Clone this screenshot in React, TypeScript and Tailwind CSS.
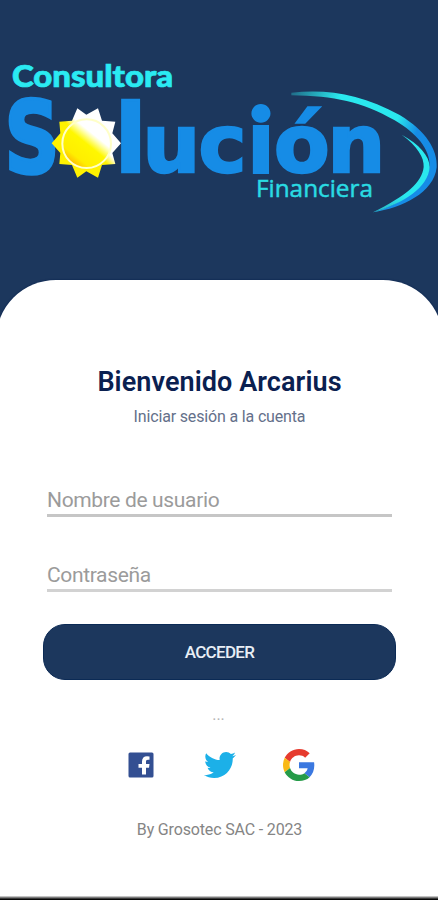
import React, { useState } from 'react';

const Logo = () => (
    <svg className="block h-[280px] w-full" viewBox="0 0 438 280" aria-label="Consultora Solución Financiera">
        <defs>
            <linearGradient id="sun" x1="0.15" y1="0.9" x2="0.75" y2="0.15">
                <stop offset="0" stopColor="#ffb400" />
                <stop offset="0.2" stopColor="#ffee00" />
                <stop offset="0.55" stopColor="#fff700" />
                <stop offset="0.72" stopColor="#ffffb0" />
                <stop offset="0.8" stopColor="#ffffff" />
            </linearGradient>
            <linearGradient id="rays" x1="0.2" y1="0.8" x2="0.8" y2="0.2">
                <stop offset="0" stopColor="#fff200" />
                <stop offset="0.5" stopColor="#fff200" />
                <stop offset="0.65" stopColor="#ffffff" />
            </linearGradient>
            <linearGradient id="outer" gradientUnits="userSpaceOnUse" x1="220" y1="130" x2="650" y2="300">
                <stop offset="0" stopColor="#2ae8ee" stopOpacity="0.3" />
                <stop offset="0.3" stopColor="#2ae8ee" />
                <stop offset="0.7" stopColor="#2ae8ee" />
                <stop offset="0.85" stopColor="#168ce6" />
            </linearGradient>
            <linearGradient id="inner" gradientUnits="userSpaceOnUse" x1="550" y1="250" x2="470" y2="490">
                <stop offset="0" stopColor="#2ae8ee" />
                <stop offset="0.7" stopColor="#2ae8ee" />
                <stop offset="1" stopColor="#2ab0c0" />
            </linearGradient>
        </defs>
        <text x="12" y="86.500" textLength="161" lengthAdjust="spacingAndGlyphs" fill="#2aeaf2" stroke="#2aeaf2" strokeWidth="0.700" className="font-['Lato',sans-serif] text-[30px] font-black">Consultora</text>
        <g fill="#168ce6" stroke="#168ce6" strokeWidth="2.500" className="font-['DejaVu_Sans',sans-serif] font-bold">
            <text x="4.500" y="173" textLength="55" lengthAdjust="spacingAndGlyphs" strokeWidth="3.500" className="text-[99px]">S</text>
            <text y="172" className="text-[81px]">
                <tspan x="114.500" className="text-[94px]">l</tspan>
                <tspan x="142.500">u</tspan>
                <tspan x="198.500">c</tspan>
                <tspan x="249.500" y="171.500" strokeWidth="4" className="font-['Lato',sans-serif] text-[88px] font-black">i</tspan>
                <tspan x="274" y="172">ó</tspan>
                <tspan x="327.500">n</tspan>
            </text>
        </g>
        <text x="256" y="197" textLength="117" lengthAdjust="spacingAndGlyphs" fill="#2adbe3" stroke="#2adbe3" strokeWidth="0.500" className="font-['Open_Sans',sans-serif] text-[24.5px] font-medium">Financiera</text>
        <g transform="translate(0 50) scale(.33333)">
            <path d="M232 175 259 194 294 175 306 212 346 215 337 250 363 280 337 309 346 342 306 345 294 383 259 364 232 383 216 345 178 342 181 309 155 280 181 250 178 215 216 212Z" fill="url(#rays)" />
            <circle cx="260" cy="281" r="73" fill="url(#sun)" stroke="#ffffc8" strokeWidth="6" />
        </g>
        <g transform="translate(218 50) scale(.33333)">
            <path d="M220 128C330 116 430 133 545 195C625 243 659 300 656 352C648 428 553 474 465 487C575 452 627 402 635 348C636 297 596 250 530 211C430 155 350 138 220 136Z" fill="url(#outer)" />
            <path d="M551 254C604 282 635 319 635 351C631 412 557 460 465 487C566 436 612 398 617 351C619 322 598 289 551 254Z" fill="url(#inner)" />
        </g>
    </svg>
);

const FacebookIcon = () => (
    <svg className="h-[26px] w-[26px]" viewBox="0 0 26 26">
        <rect x="0.500" y="0.500" width="25" height="25" rx="1.500" fill="#334f92" />
        <path d="M14 22.500V15.700H10.500V12H14V9.500C14 6 16 4.300 19 4.300L21.500 4.500V7.800H20C18.500 7.800 18 8.500 18 9.700V12H21.500L21 15.700H18V22.500Z" fill="#fff" />
    </svg>
);

const TwitterIcon = () => (
    <svg className="h-[32px] w-[32px]" viewBox="0 0 24 24" fill="#1cb0e8">
        <path d="M23.954 4.569c-.885.389-1.830.654-2.825.775 1.014-.611 1.794-1.574 2.163-2.723-.951.555-2.005.959-3.127 1.184-.896-.959-2.173-1.559-3.591-1.559-2.717 0-4.920 2.203-4.920 4.917 0 .390.045.765.127 1.124C7.691 8.094 4.066 6.130 1.640 3.161c-.427.722-.666 1.561-.666 2.475 0 1.710.870 3.213 2.188 4.096-.807-.026-1.566-.248-2.228-.616v.061c0 2.385 1.693 4.374 3.946 4.827-.413.111-.849.171-1.296.171-.314 0-.615-.030-.916-.086.631 1.953 2.445 3.377 4.604 3.417-1.680 1.319-3.809 2.105-6.102 2.105-.390 0-.779-.023-1.170-.067 2.189 1.394 4.768 2.209 7.557 2.209 9.054 0 13.999-7.496 13.999-13.986 0-.209 0-.420-.015-.630.961-.689 1.800-1.560 2.460-2.548z" />
    </svg>
);

const GoogleIcon = () => (
    <svg className="h-[32px] w-[32px]" viewBox="0 0 48 48">
        <path fill="#e63b2e" d="M24 9.500c3.540 0 6.710 1.220 9.210 3.600l6.850-6.850C35.900 2.380 30.470 0 24 0 14.620 0 6.510 5.380 2.560 13.220l7.980 6.190C12.430 13.720 17.740 9.500 24 9.500z" />
        <path fill="#3b78e0" d="M46.980 24.550c0-1.570-.150-3.090-.380-4.550H24v9.020h12.940c-.580 2.960-2.260 5.480-4.780 7.180l7.730 6c4.510-4.180 7.090-10.360 7.090-17.650z" />
        <path fill="#f9b916" d="M10.530 28.590c-.480-1.450-.760-2.990-.760-4.590s.270-3.140.760-4.590l-7.980-6.190C.920 16.460 0 20.120 0 24s.920 7.540 2.560 10.780z" />
        <path fill="#259b48" d="M24 48c6.480 0 11.930-2.130 15.890-5.810l-7.730-6c-2.150 1.450-4.920 2.300-8.160 2.300-6.260 0-11.570-4.220-13.470-9.910l-7.980 6.190C6.510 42.620 14.620 48 24 48z" />
    </svg>
);

const fieldClass = "block h-[37px] w-full border-b-[3px] bg-transparent pt-[5px] text-[21px] tracking-[-0.35px] text-[#666] placeholder:text-[#9b9b9b] focus:outline-none";

export default function App() {
    const [user, setUser] = useState<string>('');
    const [password, setPassword] = useState<string>('');

    return (
        <div className="flex h-[900px] w-full flex-col overflow-hidden bg-[#1c375d] font-['Roboto',sans-serif]">
            <Logo />
            <main className="-mr-[5px] -ml-[4px] flex flex-1 flex-col items-center rounded-t-[60px] bg-white shadow-[0_0_2px_#001c4a]">
                <h1 className="mt-[85px] text-[27px] leading-[34px] font-semibold tracking-[0.08px] whitespace-nowrap text-[#0a2050]">Bienvenido Arcarius</h1>
                <p className="mt-[8px] text-[16px] leading-[20px] tracking-[-0.16px] whitespace-nowrap text-[#64708a]">Iniciar sesión a la cuenta</p>

                <form className="mt-[53px] flex w-[345px] flex-col" onSubmit={(e) => e.preventDefault()}>
                    <input
                        type="text"
                        className={`${fieldClass} border-[#c6c6c6]`}
                        placeholder="Nombre de usuario"
                        value={user}
                        onChange={(e) => setUser(e.target.value)}
                    />
                    <input
                        type="password"
                        className={`${fieldClass} mt-[38px] border-[#d2d2d2]`}
                        placeholder="Contraseña"
                        value={password}
                        onChange={(e) => setPassword(e.target.value)}
                    />
                    <button
                        type="submit"
                        className="-mx-[4px] mt-[32px] h-[56px] rounded-[22px] border border-[#0b2a55] bg-[#1c375d] pt-[2px] text-[17px] font-medium tracking-[-0.7px] text-[#e8eef5]"
                    >
                        ACCEDER
                    </button>
                </form>

                <span className="mt-[25px] mr-[2px] text-[16px] leading-[20px] text-[#b4b4b4]">...</span>
                <div className="mt-[23px] ml-[4px] flex h-[34px] items-center">
                    <FacebookIcon />
                    <div className="ml-[50px] flex"><TwitterIcon /></div>
                    <div className="ml-[47px] flex"><GoogleIcon /></div>
                </div>
                <p className="mt-[37px] text-[16px] leading-[22px] tracking-[-0.16px] whitespace-nowrap text-[#858585]">By Grosotec SAC - 2023</p>
            </main>
            <div className="h-[4px] shrink-0 bg-linear-to-b from-[#e8e8e8] to-black" />
        </div>
    );
}
